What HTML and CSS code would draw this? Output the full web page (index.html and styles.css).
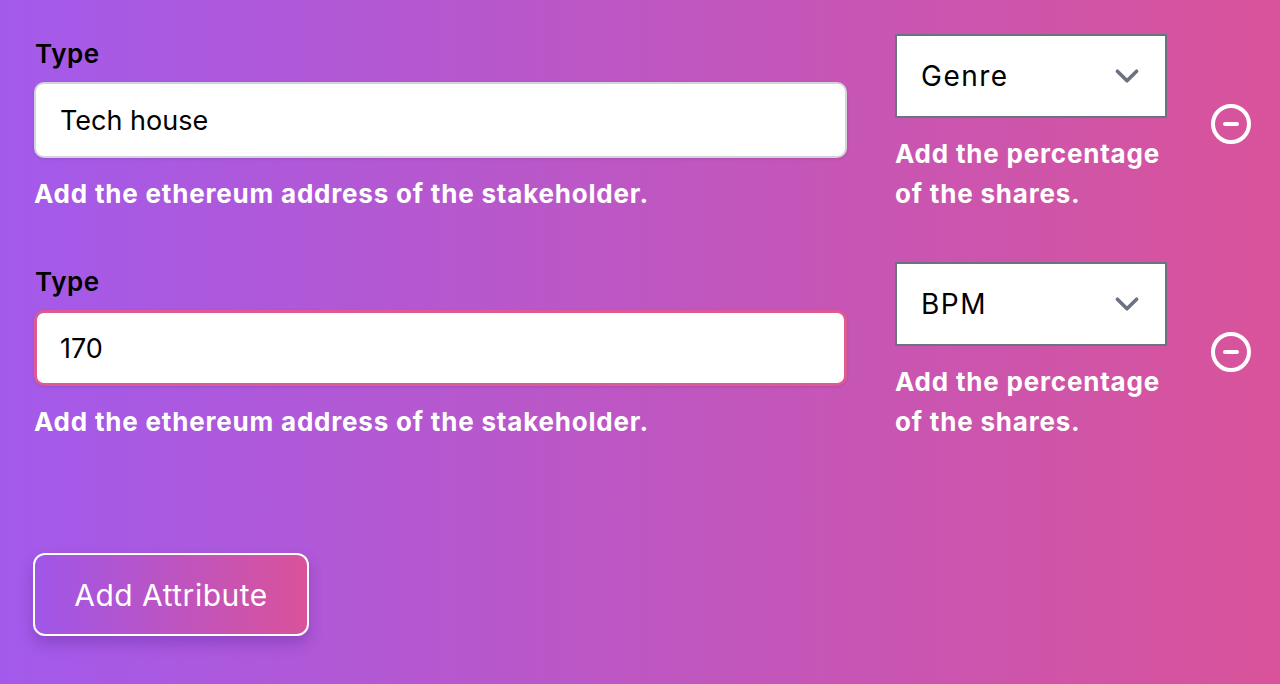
FILE: index.html
```html
<!DOCTYPE html>
<html>
<head>
<meta charset="utf-8">
<link rel="stylesheet" href="styles.css">
</head>
<body>
<div class="page">
  <div class="row">
    <div class="main-col">
      <label class="label">Type</label>
      <div class="input">Tech house</div>
      <p class="help">Add the ethereum address of the stakeholder.</p>
    </div>
    <div class="side-col">
      <div class="select"><span>Genre</span>
        <svg class="chev" viewBox="0 0 20 20" width="48" height="48"><path d="M6 8l4 4 4-4" fill="none" stroke="#6b7280" stroke-width="1.5" stroke-linecap="round" stroke-linejoin="round"/></svg>
      </div>
      <p class="help">Add the percentage of the shares.</p>
    </div>
    <div class="icon-col">
      <svg viewBox="0 0 24 24" width="48" height="48" fill="none" stroke="#fff" stroke-width="2" stroke-linecap="round" stroke-linejoin="round"><path d="M15 12H9m12 0a9 9 0 11-18 0 9 9 0 0118 0z"/></svg>
    </div>
  </div>
  <div class="row">
    <div class="main-col">
      <label class="label">Type</label>
      <div class="input input-active">170</div>
      <p class="help">Add the ethereum address of the stakeholder.</p>
    </div>
    <div class="side-col">
      <div class="select"><span>BPM</span>
        <svg class="chev" viewBox="0 0 20 20" width="48" height="48"><path d="M6 8l4 4 4-4" fill="none" stroke="#6b7280" stroke-width="1.5" stroke-linecap="round" stroke-linejoin="round"/></svg>
      </div>
      <p class="help">Add the percentage of the shares.</p>
    </div>
    <div class="icon-col">
      <svg viewBox="0 0 24 24" width="48" height="48" fill="none" stroke="#fff" stroke-width="2" stroke-linecap="round" stroke-linejoin="round"><path d="M15 12H9m12 0a9 9 0 11-18 0 9 9 0 0118 0z"/></svg>
    </div>
  </div>
  <div class="actions">
    <button class="btn">Add Attribute</button>
  </div>
</div>
</body>
</html>
```
FILE: styles.css
```css
html, body {
  margin: 0;
  padding: 0;
  height: 100%;
}
body {
  background: linear-gradient(to right, #a35aeb, #d9539a);
  font-family: Inter, "Noto Sans", sans-serif;
  overflow: hidden;
}
.page {
  padding: 34px 0 0 34px;
  display: flex;
  flex-direction: column;
  gap: 48px;
}
.row {
  display: flex;
  align-items: center;
}
.main-col {
  width: 813px;
  display: flex;
  flex-direction: column;
}
.label {
  font-size: 26px;
  font-weight: 600;
  line-height: 40px;
  letter-spacing: 0.6px;
  color: #000;
  padding-left: 1px;
}
.input {
  margin-top: 8px;
  height: 76px;
  box-sizing: border-box;
  background: #fff;
  border: 2px solid #d1d5db;
  border-radius: 10px;
  padding: 0 24px;
  display: flex;
  align-items: center;
  font-size: 27px;
  color: #000;
  box-shadow: 0 1px 3px rgba(0,0,0,0.1);
}
.input-active {
  border: 3px solid #dd5a92;
  padding-left: 23px;
}
.help {
  margin: 16px 0 0 0;
  font-size: 26px;
  font-weight: 700;
  line-height: 40px;
  letter-spacing: 0.8px;
  color: #fff;
}
.side-col {
  margin-left: 48px;
  width: 272px;
  display: flex;
  flex-direction: column;
}
.select {
  height: 84px;
  box-sizing: border-box;
  background: #fff;
  border: 2px solid #6b7280;
  padding: 0 14px 0 24px;
  display: flex;
  align-items: center;
  justify-content: space-between;
  font-size: 28px;
  letter-spacing: 1.5px;
  color: #000;
}
.chev {
  display: block;
}
.icon-col {
  margin-left: 40px;
  width: 48px;
  height: 48px;
}
.icon-col svg {
  display: block;
}
.actions {
  padding-top: 63px;
}
.btn {
  width: 276px;
  height: 83px;
  margin-left: -1px;
  border: 2px solid #fff;
  border-radius: 12px;
  background: linear-gradient(to right, #9f56e9, #da529a);
  color: #fff;
  font-family: Inter, "Noto Sans", sans-serif;
  font-size: 30px;
  font-weight: 400;
  letter-spacing: 0.5px;
  box-shadow: 0 8px 14px rgba(80, 30, 140, 0.3);
  cursor: pointer;
}
```
